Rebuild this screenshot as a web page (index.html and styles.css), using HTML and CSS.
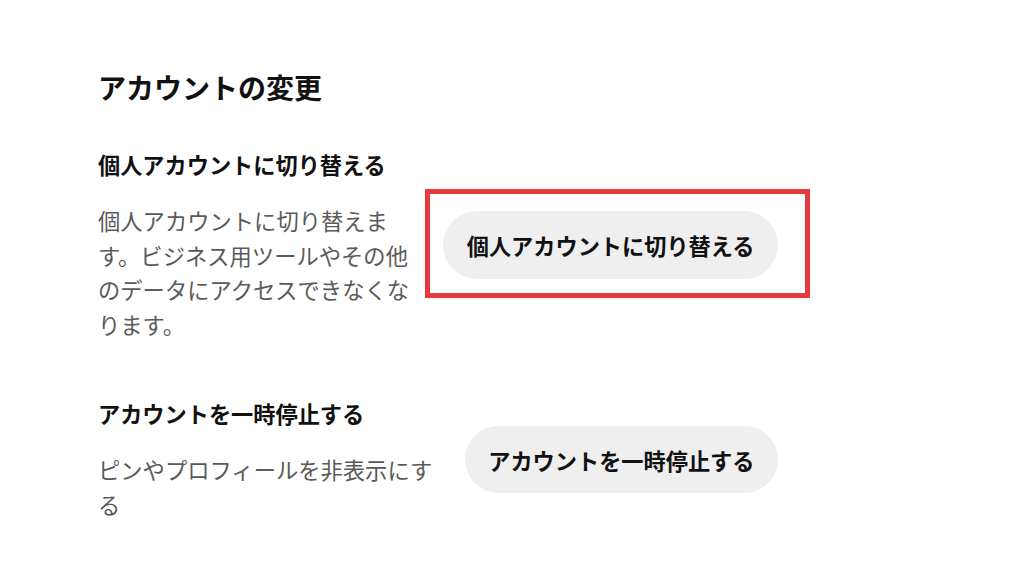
FILE: index.html
```html
<!DOCTYPE html>
<html lang="ja">
<head>
<meta charset="utf-8">
<link rel="stylesheet" href="styles.css">
</head>
<body>
<main class="page">
  <h1 class="title">アカウントの変更</h1>
  <section class="row row-first">
    <div class="info">
      <h2 class="heading">個人アカウントに切り替える</h2>
      <p class="desc">個人アカウントに切り替えます。ビジネス用ツールやその他のデータにアクセスできなくなります。</p>
    </div>
    <div class="action highlighted">
      <button class="btn btn-tall">個人アカウントに切り替える</button>
    </div>
  </section>
  <section class="row row-second">
    <div class="info">
      <h2 class="heading">アカウントを一時停止する</h2>
      <p class="desc">ピンやプロフィールを非表示にする</p>
    </div>
    <div class="action">
      <button class="btn">アカウントを一時停止する</button>
    </div>
  </section>
</main>
</body>
</html>
```
FILE: styles.css
```css
* { box-sizing: border-box; }
html, body {
  margin: 0;
  padding: 0;
  background: #ffffff;
}
body {
  font-family: "Noto Sans CJK JP", "Noto Sans", sans-serif;
  color: #111111;
  width: 1024px;
  height: 574px;
  overflow: hidden;
}
.page {
  padding: 69px 0 0 98px;
  width: 778px;
}
.title {
  margin: 0;
  font-size: 28px;
  line-height: 36px;
  font-weight: 700;
  color: #111;
}
.row {
  display: flex;
  align-items: center;
  gap: 24px;
}
.row-first { margin-top: 44px; }
.row-second { margin-top: 56px; }
.info {
  flex: 1 1 auto;
  min-width: 0;
}
.heading {
  margin: 0;
  font-size: 22.2px;
  line-height: 30px;
  font-weight: 700;
  color: #111;
}
.desc {
  margin: 24px 0 0 0;
  font-size: 22.3px;
  line-height: 34.7px;
  font-weight: 400;
  color: #5a5a5a;
}
.action {
  flex: 0 0 auto;
  position: relative;
}
.btn {
  display: block;
  height: 67px;
  padding: 0 23.5px;
  border: none;
  border-radius: 34px;
  background: #efefef;
  font-family: "Noto Sans CJK JP", "Noto Sans", sans-serif;
  font-size: 22.2px;
  font-weight: 700;
  color: #111;
  white-space: nowrap;
}
.btn-tall { height: 68px; }
.highlighted::after {
  content: "";
  position: absolute;
  top: -22px;
  left: -18px;
  right: -32px;
  bottom: -19px;
  border: 5px solid #e9393c;
}
```
